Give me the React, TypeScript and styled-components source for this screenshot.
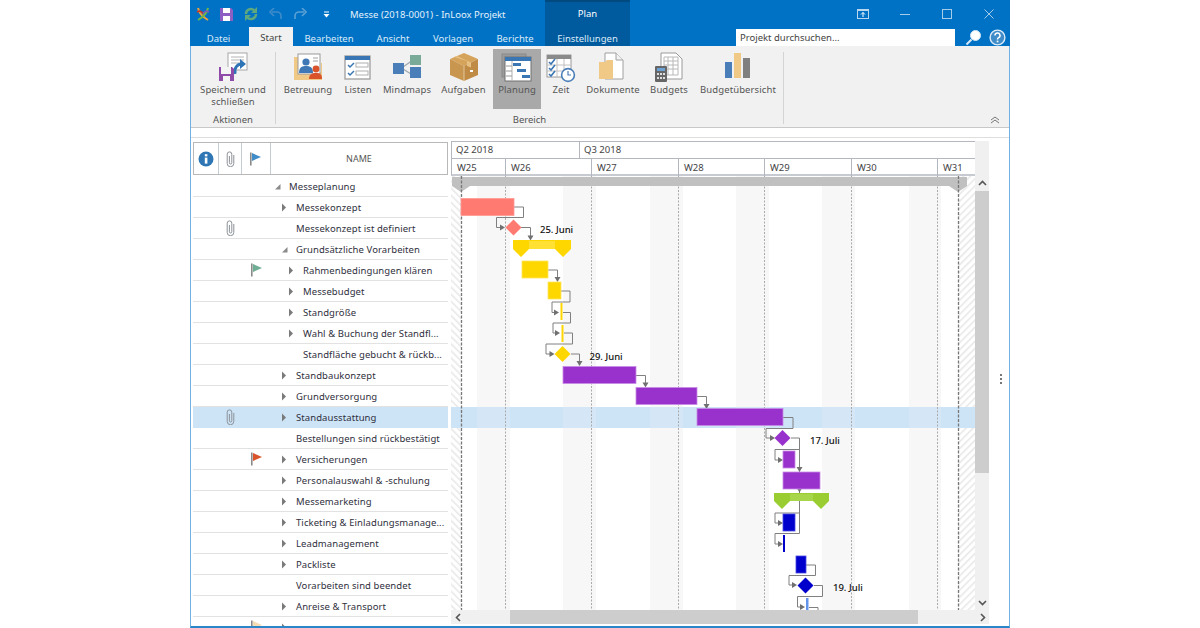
import React from "react";
import styled, { createGlobalStyle } from "styled-components";

const Global = createGlobalStyle`
  html, body { margin: 0; padding: 0; background: #fff; }
  body { font-family: "Noto Sans", "Open Sans", "Liberation Sans", sans-serif; }
  * { box-sizing: border-box; }
`;

const Win = styled.div`
  width: 820px; height: 628px; margin: 0 auto; display: flex; flex-direction: column; overflow: hidden;
  background: #fff; font-size: 9.5px; color: #333;
`;
const TitleBar = styled.div`
  height: 28px; background: #0072c6; display: flex; align-items: stretch; color: #fff;
`;
const Qat = styled.div`
  width: 160px; display: flex; align-items: center; padding-left: 5px;
`;
const QatSlot = styled.div<{ $w: number }>`
  width: ${p => p.$w}px; height: 18px; display: flex; align-items: center; justify-content: center;
`;
const Title = styled.div`
  width: 195px; display: flex; align-items: center; font-size: 9.5px; color: #e6f1fa;
`;
const PlanLabel = styled.div`
  width: 85px; background: #005a9e; border-top: 2px solid #004a80; text-align: center; padding-top: 5px; font-size: 9.5px;
`;
const WinButtons = styled.div`
  flex: 1; display: flex; justify-content: flex-end;
`;
const WinButton = styled.div`
  width: 42px; display: flex; align-items: center; justify-content: center;
`;
const TabBar = styled.div`
  height: 18px; background: #0072c6; display: flex; align-items: stretch;
`;
const Tab = styled.div<{ $w: number; $active?: boolean; $ctx?: boolean }>`
  width: ${p => p.$w}px; text-align: center; font-size: 9.5px; line-height: 21px;
  color: ${p => (p.$active ? "#444" : "#dcebf7")};
  background: ${p => (p.$active ? "#f1f1f1" : p.$ctx ? "#005a9e" : "transparent")};
  margin-left: ${p => (p.$active ? 2 : 0)}px;
`;
const ActiveTabCap = styled(Tab)`
  margin-top: -1px; line-height: 22px; height: 19px;
`;
const SearchBox = styled.div`
  width: 219px; margin-left: 106px; margin-top: 1px; background: #fff; color: #444; font-size: 9.5px; line-height: 17px; padding-left: 4px;
`;
const TabIcon = styled.div`
  flex: 1; display: flex; align-items: center; gap: 7px; padding-left: 10px;
`;
const Main = styled.div`
  flex: 1; min-height: 0; display: flex; flex-direction: column;
  border-left: 1px solid #6fb1e3; border-right: 1px solid #6fb1e3; border-bottom: 2px solid #2a86c8;
`;
const Ribbon = styled.div`
  height: 82px; background: #f1f1f1; border-bottom: 1px solid #c8c8c8; display: flex; padding-top: 3px;
`;
const RibbonGroup = styled.div<{ $w: number }>`
  width: ${p => p.$w}px; height: 72px; border-right: 1px solid #d4d4d4; display: flex; flex-direction: column; margin-top: 3px; position: relative;
`;
const RibbonButtons = styled.div<{ $pad: number }>`
  display: flex; height: 60px; padding-left: ${p => p.$pad}px; margin-top: -3px;
`;
const RibbonButton = styled.div<{ $w: number; $on?: boolean }>`
  width: ${p => p.$w}px; height: 60px; padding-top: 3px; display: flex; flex-direction: column; align-items: center;
  background: ${p => (p.$on ? "#a9a9a9" : "transparent")}; color: #555; font-size: 9.5px; line-height: 12px; text-align: center; letter-spacing: .1px;
`;
const RibbonIcon = styled.svg`
  width: 32px; height: 31px; flex: none; margin-bottom: 1px;
`;
const GroupLabel = styled.div`
  text-align: center; font-size: 9.5px; line-height: 12px; color: #555; margin-top: 5px;
`;
const RibbonRest = styled.div`
  flex: 1; display: flex; align-items: flex-end; justify-content: flex-end; padding: 0 9px 3px 0;
`;
const Gap = styled.div`
  height: 10px; flex: none; border-bottom: 1px solid #dedede;
`;
const Content = styled.div`
  flex: 1; min-height: 0; display: flex; overflow: hidden;
`;
const TablePane = styled.div`
  width: 255px; margin: 4px 0 0 2px; flex: none;
`;
const THead = styled.div`
  height: 33px; margin-bottom: 1px; border: 1px solid #b8b8b8; display: grid; grid-template-columns: 25px 23px 29px 1fr; background: #fff;
`;
const THeadCell = styled.div<{ $last?: boolean }>`
  display: flex; align-items: center; justify-content: center; position: relative;
  border-right: ${p => (p.$last ? "none" : "1px solid #c4ccd4")}; color: #555; font-size: 9px;
`;
const Row = styled.div<{ $sel?: boolean }>`
  height: 21px; display: grid; grid-template-columns: 26px 23px 29px 177px;
  border-bottom: 1px solid ${p => (p.$sel ? "#cde4f7" : "#e2e2e2")};
  background: ${p => (p.$sel ? "#cde4f7" : "#fff")};
`;
const IconCell = styled.div`
  display: flex; align-items: center; justify-content: center;
`;
const NameCell = styled.div<{ $level: number }>`
  display: flex; align-items: center; min-width: 0; padding-left: ${p => 3 + 7 * p.$level}px;
  color: #2f2f3d; font-size: 9.5px; letter-spacing: .08px;
`;
const Toggle = styled.div`
  width: 15px; flex: none; display: flex; align-items: center;
`;
const Name = styled.span`
  white-space: nowrap;
`;
const GanttPane = styled.div`
  width: 538px; margin: 3px 0 0 3px; flex: none; display: grid; grid-template-columns: 524px 14px; grid-template-rows: 35px 434px 14px;
`;
const GHead = styled.div`
  display: flex; flex-direction: column; border: 1px solid #b4b6c0; border-bottom: 2px solid #c8cad2; border-right: none;
`;
const GHeadRow = styled.div<{ $b?: boolean }>`
  display: flex; flex: 1; ${p => (p.$b ? "border-bottom: 1px solid #b4b6c0;" : "")}
`;
const GHeadCell = styled.div<{ $w: number; $last?: boolean; $low?: boolean }>`
  width: ${p => p.$w}px; padding-left: ${p => (p.$low ? 5 : 4)}px; color: #444; font-size: 9.5px; line-height: ${p => (p.$low ? 18 : 16)}px;
  ${p => (p.$last ? "flex: 1;" : "border-right: 1px solid #b4b6c0;")}
`;
const HeadCorner = styled.div`
  background: #f0f0f0;
`;
const Chart = styled.svg`
  display: block; width: 524px; height: 434px;
`;
const VScroll = styled.div`
  background: #f0f0f0; display: flex; flex-direction: column; align-items: stretch;
`;
const ScrollBtn = styled.div<{ $h: number }>`
  height: ${p => p.$h}px; flex: none; display: flex; align-items: center; justify-content: center;
`;
const VThumb = styled.div`
  height: 282px; background: #cdcdcd; flex: none;
`;
const Fill = styled.div`
  flex: 1;
`;
const HScroll = styled.div`
  grid-column: 1 / 3; background: #f0f0f0; display: flex; align-items: stretch;
`;
const HThumb = styled.div`
  width: 408px; background: #cdcdcd; margin-left: 45px;
`;
const ScrollEnd = styled.div<{ $w: number }>`
  width: ${p => p.$w}px; flex: none; display: flex; align-items: center; justify-content: center;
`;
const Splitter = styled.div`
  flex: 1; display: flex; flex-direction: column; align-items: center; justify-content: center; gap: 2px; padding: 0 0 6px 4px;
`;
const Dot = styled.div`
  width: 2px; height: 2px; background: #777;
`;
const ChartLabel = styled.text`
  font-family: "Noto Sans", "Open Sans", sans-serif; font-size: 9.5px; font-weight: 500; fill: #111;
`;

const Chev = ({ d }: { d: string }) => (
  <svg width="9" height="9" viewBox="0 0 9 9"><path d={d} fill="none" stroke="#555" strokeWidth="1.6" /></svg>
);

const Clip = () => (
  <svg width="9" height="16" viewBox="0 0 9 16">
    <path d="M7.8 4v8.4a3.3 3.3 0 0 1-6.6 0V3.2a2.3 2.3 0 0 1 4.6 0v8.6a1.2 1.2 0 0 1-2.4 0V5" fill="none" stroke="#8c9298" strokeWidth="1" />
  </svg>
);
const Flag = ({ c }: { c: string }) => (
  <svg width="12" height="14" viewBox="0 0 12 14">
    <rect x="0" y="0.5" width="1.6" height="13" fill="#8a8a8a" /><path d="M2 1l9 4-9 4z" fill={c} />
  </svg>
);
const Closed = () => <svg width="6" height="9" viewBox="0 0 6 9"><path d="M1 .5l4 4-4 4z" fill="#7a7a7a" /></svg>;
const Open = () => <svg width="7" height="7" viewBox="0 0 7 7"><path d="M6.5 1v5.5H1z" fill="#8a8a8a" /></svg>;

const SaveIcon = () => (
  <RibbonIcon viewBox="0 0 32 31">
    <rect x="11" y="1" width="19" height="17" fill="#fff" stroke="#a8a8a8" />
    <path d="M14 5h13M14 8h13M14 11h9" stroke="#b4b4b4" />
    <path d="M18 22c-1-6 2-10 7-10" fill="none" stroke="#2f75b5" strokeWidth="3" /><path d="M23 7l6 5-6 5z" fill="#2f75b5" />
    <path d="M2 15h13l2 2v12H2z" fill="#8e4ba8" /><rect x="4" y="15" width="10" height="7" fill="#f4f4f4" /><rect x="6" y="24" width="7" height="5" fill="#f4f4f4" />
  </RibbonIcon>
);
const CareIcon = () => (
  <RibbonIcon viewBox="0 0 32 31">
    <path d="M2 5h4v22h24V11h-1V27H2z" fill="#f0c987" /><rect x="2" y="20" width="28" height="8" fill="#f0c987" />
    <rect x="6" y="2" width="22" height="20" fill="#fff" stroke="#9a9a9a" />
    <circle cx="14" cy="10" r="3.6" fill="#3f78b4" /><path d="M7 21c0-6 3-7 7-7s7 1 7 7z" fill="#3f78b4" />
    <path d="M21 6h5M21 9h5" stroke="#a0a0a0" />
    <circle cx="24" cy="17" r="3.4" fill="#d9542b" /><path d="M17 27c0-5 3-6 7-6s6 1 6 6z" fill="#d9542b" />
  </RibbonIcon>
);
const ListIcon = () => (
  <RibbonIcon viewBox="0 0 32 31">
    <rect x="3" y="4" width="25" height="23" fill="#fff" stroke="#a4a4a4" strokeWidth="1.4" />
    <rect x="3" y="4" width="25" height="4" fill="#3a76b3" />
    <rect x="14" y="11" width="12" height="4" fill="#fff" stroke="#b0b0b0" /><rect x="14" y="19" width="12" height="4" fill="#fff" stroke="#b0b0b0" />
    <path d="M6 13l2 2 4-4M6 21l2 2 4-4" fill="none" stroke="#3a76b3" strokeWidth="1.5" />
  </RibbonIcon>
);
const MindIcon = () => (
  <RibbonIcon viewBox="0 0 32 31">
    <path d="M12 15L22 8M12 17l8 5" stroke="#9aa7b0" strokeWidth="1.2" />
    <rect x="2" y="11" width="11" height="11" fill="#4a7eb8" /><rect x="19" y="3" width="11" height="10" fill="#7aab98" /><rect x="19" y="15" width="11" height="11" fill="#4a7eb8" />
  </RibbonIcon>
);
const BoxIcon = () => (
  <RibbonIcon viewBox="0 0 32 31">
    <path d="M16 1l14 6-14 7L2 7z" fill="#d6a35a" /><path d="M2 7l14 7v15L2 23z" fill="#c8964f" /><path d="M30 7l-14 7v15l14-6z" fill="#c08c45" />
    <path d="M9 4l14 6.5v5l-4-1.5V9L6 5z" fill="#e6bf82" /><rect x="22" y="18" width="3" height="2" fill="#fff" />
    <path d="M16 14v15" stroke="#f1dfc0" strokeWidth=".7" />
  </RibbonIcon>
);
const PlanIcon = () => (
  <RibbonIcon viewBox="0 0 32 31">
    <rect x="1" y="2" width="24" height="23" fill="#9a9a9a" stroke="#8a8a8a" />
    <rect x="4" y="5" width="26" height="24" fill="#fff" stroke="#707070" />
    <rect x="4" y="5" width="26" height="4" fill="#3a76b3" /><path d="M11 9v20" stroke="#b0b0b0" /><path d="M5 14h6M5 19h6M5 24h6" stroke="#9a9a9a" />
    <rect x="12" y="11" width="8" height="3" fill="#3a76b3" /><rect x="16" y="17" width="9" height="3" fill="#3a76b3" /><rect x="21" y="23" width="8" height="3" fill="#3a76b3" />
  </RibbonIcon>
);
const TimeIcon = () => (
  <RibbonIcon viewBox="0 0 32 31">
    <rect x="2" y="3" width="24" height="22" fill="#fff" stroke="#9a9a9a" /><rect x="2" y="3" width="24" height="4" fill="#8a8a8a" />
    <path d="M12 7v18M19 7v18M2 13h24M2 19h24" stroke="#c0c0c0" />
    <path d="M4 10l2 2 4-5M4 16l2 2 4-5M4 22l2 2 4-5" fill="none" stroke="#3a76b3" strokeWidth="1.6" />
    <circle cx="23" cy="23" r="6.4" fill="#fff" stroke="#4a7eb8" strokeWidth="1.6" /><path d="M23 19v4h3" fill="none" stroke="#4a7eb8" strokeWidth="1.2" />
  </RibbonIcon>
);
const DocIcon = () => (
  <RibbonIcon viewBox="0 0 32 31">
    <path d="M8 1h11l7 7v19H8z" fill="#fff" stroke="#a0a0a0" /><path d="M19 1v7h7" fill="#f2f2f2" stroke="#a0a0a0" />
    <path d="M2 10h6l2 -2h6v19H2z" fill="#f0c987" />
  </RibbonIcon>
);
const BudgetIcon = () => (
  <RibbonIcon viewBox="0 0 32 31">
    <path d="M8 1h15l6 6v20H8z" fill="#fff" stroke="#9a9a9a" />
    <path d="M11 5h14v18H11zM11 9h14M11 13h14M11 17h14M15 5v18M20 5v18" fill="none" stroke="#b8b8b8" />
    <rect x="2" y="14" width="12" height="16" fill="#666" rx="1" /><rect x="4" y="16" width="8" height="3" fill="#6ea2d4" />
    <path d="M4 21h2v2H4zM7 21h2v2H7zM10 21h2v2h-2zM4 25h2v2H4zM7 25h2v2H7zM10 25h2v2h-2z" fill="#ddd" />
  </RibbonIcon>
);
const BarsIcon = () => (
  <RibbonIcon viewBox="0 0 32 31">
    <rect x="3" y="10" width="7" height="16" fill="#4a7eb8" /><rect x="12" y="1" width="7" height="25" fill="#f0c987" /><rect x="21" y="6" width="7" height="20" fill="#808080" />
  </RibbonIcon>
);

type RowData = { name: string; level: number; kind?: "open" | "closed" | "none"; clip?: boolean; flag?: string; sel?: boolean };
const rows: RowData[] = [
  { name: "Messeplanung", level: 0, kind: "open" },
  { name: "Messekonzept", level: 1, kind: "closed" },
  { name: "Messekonzept ist definiert", level: 1, clip: true },
  { name: "Grundsätzliche Vorarbeiten", level: 1, kind: "open" },
  { name: "Rahmenbedingungen klären", level: 2, kind: "closed", flag: "#6fae94" },
  { name: "Messebudget", level: 2, kind: "closed" },
  { name: "Standgröße", level: 2, kind: "closed" },
  { name: "Wahl & Buchung der Standfl...", level: 2, kind: "closed" },
  { name: "Standfläche gebucht & rückb...", level: 2 },
  { name: "Standbaukonzept", level: 1, kind: "closed" },
  { name: "Grundversorgung", level: 1, kind: "closed" },
  { name: "Standausstattung", level: 1, kind: "closed", clip: true, sel: true },
  { name: "Bestellungen sind rückbestätigt", level: 1 },
  { name: "Versicherungen", level: 1, kind: "closed", flag: "#d9542b" },
  { name: "Personalauswahl & -schulung", level: 1, kind: "closed" },
  { name: "Messemarketing", level: 1, kind: "closed" },
  { name: "Ticketing & Einladungsmanage...", level: 1, kind: "closed" },
  { name: "Leadmanagement", level: 1, kind: "closed" },
  { name: "Packliste", level: 1, kind: "closed" },
  { name: "Vorarbeiten sind beendet", level: 1 },
  { name: "Anreise & Transport", level: 1, kind: "closed" },
  { name: "", level: 1, kind: "closed", flag: "#f4dcb4" },
];

const weeks: [string, number][] = [["W25", 54], ["W26", 86], ["W27", 87], ["W28", 86], ["W29", 87], ["W30", 86]];
const weekLines = [505.5, 591.5, 678.5, 764.5, 851.5, 937.5];
const weekends: [number, number][] = [[477, 510], [563, 596], [650, 683], [736, 769], [822, 855], [909, 941]];

type Bar = [number, number, number, number, string, string];
const bars: Bar[] = [
  [461, 198.5, 53, 17, "#ff7b72", "#ff9a92"],
  [522, 261, 26, 17, "#ffd700", "#ffe45c"],
  [548, 282, 13, 17, "#ffd700", "#ffe45c"],
  [560.5, 303, 2, 17, "#ffd700", "#ffd700"],
  [561.5, 325, 2, 17, "#ffd700", "#ffd700"],
  [563, 366.5, 73, 17, "#9932cc", "#c78be6"],
  [636, 387.5, 61, 17, "#9932cc", "#c78be6"],
  [697, 408.5, 86, 17, "#9932cc", "#c78be6"],
  [783, 451, 12, 17, "#9932cc", "#c78be6"],
  [783, 472, 37, 17, "#9932cc", "#c78be6"],
  [783, 514, 12, 17, "#0000cd", "#4a4ae0"],
  [783, 535, 2, 17, "#0000cd", "#0000cd"],
  [796, 556, 10, 17, "#0000cd", "#4a4ae0"],
  [806, 598, 2.5, 17, "#6495ed", "#6495ed"],
];
const diamonds: [number, number, string][] = [
  [513.5, 227.5, "#ff7b72"], [562.5, 354, "#ffd700"], [782.5, 438, "#9932cc"], [805.5, 585.5, "#0000cd"],
];
const links: string[] = [
  "M514 207H523.5V217.5H496.5V227.5H503",
  "M521 227.5H530.5V238",
  "M548 270H557.5V280",
  "M561 291H570V302H552V312.5H557",
  "M563 312.5H570.5V323H553V333H558",
  "M564 333H572.5V344H546V354H552",
  "M571 354H579.5V364",
  "M636 375.5H645.5V385",
  "M697 396.5H706.5V406.5",
  "M783 417.5H793V428.5H766V438H773",
  "M791 438H799.5V533.5H775V544H781",
  "M799.5 449.5H775V460H781",
  "M799.5 513H775V523H781",
  "M806 565H815.5V575.5H789V585H795",
  "M814 585.5H822.5V596.5H797.5V607H803",
  "M809 607.5H818V615",
];
const arrows: [number, number, "r" | "d"][] = [
  [505, 227.5, "r"], [530.5, 240.5, "d"], [557.5, 282, "d"], [559, 312.5, "r"], [560, 333, "r"], [554.5, 354, "r"], [579.5, 366, "d"],
  [645.5, 387.5, "d"], [706.5, 409, "d"], [775, 438, "r"], [783, 460, "r"], [799.5, 472, "d"], [799.5, 492.5, "d"], [783, 523, "r"],
  [783, 544, "r"], [797, 585, "r"], [805, 607, "r"],
];

const Gantt = () => (
  <Chart viewBox="451 176 524 434">
    <defs>
      <pattern id="hatchL" width="5" height="5" patternUnits="userSpaceOnUse" patternTransform="rotate(-45)">
        <rect width="5" height="5" fill="#fff" /><rect width="1.6" height="5" fill="#e8e8e8" />
      </pattern>
      <pattern id="hatchR" width="5" height="5" patternUnits="userSpaceOnUse" patternTransform="rotate(45)">
        <rect width="5" height="5" fill="#fff" /><rect width="1.6" height="5" fill="#e8e8e8" />
      </pattern>
    </defs>
    <rect x="451" y="176" width="524" height="434" fill="#fff" />
    {weekends.map(([a, b]) => <rect key={a} x={a} y="176" width={b - a} height="434" fill="#f7f7f7" />)}
    <rect x="451" y="176" width="10" height="434" fill="url(#hatchL)" />
    <rect x="958" y="176" width="17" height="434" fill="url(#hatchR)" />
    <rect x="451" y="407" width="524" height="21" fill="#cde4f7" />
    {weekends.map(([a, b]) => <rect key={a} x={a} y="407" width={b - a} height="21" fill="#f5f5f5" opacity=".2" />)}
    {weekLines.map(x => <path key={x} d={`M${x} 176V610`} stroke="#aaa" strokeWidth="1" strokeDasharray="2 1.5" />)}
    <path d="M452 177H967V186H967L958 192L949 186H470L461 192L452 186Z" fill="#c0c0c0" />
    <path d="M461.5 176V610M958.5 176V610" stroke="#777" strokeWidth="1.3" strokeDasharray="3 1.5" />
    {links.map(d => <path key={d} d={d} fill="none" stroke="#808080" strokeWidth="1" />)}
    {arrows.map(([x, y, t], i) =>
      <path key={i} d={t === "r" ? `M${x} ${y}l-5-3v6z` : `M${x} ${y}l-3-5h6z`} fill="#707070" />)}
    {bars.map(([x, y, w, h, f, s], i) => (
      <rect key={i} x={x} y={y} width={w} height={h} fill={f} stroke={w > 3 ? s : "none"} strokeWidth=".8" />
    ))}
    <path d="M513 240H571V249H571V249L563 257L555 249H529L521 257L513 249Z" fill="#ffd700" />
    <path d="M529 241H555V249H529Z" fill="#ffe033" />
    <path d="M774 493H829V501L821 509L813 501H790L782 509L774 501Z" fill="#9acd32" />
    <path d="M790 494H813V501H790Z" fill="#a8d64a" />
    {diamonds.map(([x, y, c]) => <path key={x} d={`M${x - 8} ${y}L${x} ${y - 8}L${x + 8} ${y}L${x} ${y + 8}Z`} fill={c} />)}
    <ChartLabel x="540" y="233">25. Juni</ChartLabel>
    <ChartLabel x="589.5" y="359.5">29. Juni</ChartLabel>
    <ChartLabel x="810" y="443.5">17. Juli</ChartLabel>
    <ChartLabel x="833" y="591">19. Juli</ChartLabel>
  </Chart>
);

export default function App() {
  return (
    <>
      <Global />
      <Win>
        <TitleBar>
          <Qat>
            <QatSlot $w={16}>
              <svg width="14" height="16" viewBox="0 0 14 16">
                <path d="M2 2c1 5 5 9 10 12" fill="none" stroke="#e8a33d" strokeWidth="2" /><path d="M12 2C11 7 7 11 2 14" fill="none" stroke="#6fb54a" strokeWidth="2" />
                <path d="M1 6c3-2 5 0 6 2" fill="none" stroke="#c0392b" strokeWidth="1.6" /><path d="M13 6c-3-2-5 0-6 2" fill="none" stroke="#7b5bb5" strokeWidth="1.6" />
              </svg>
            </QatSlot>
            <QatSlot $w={30}>
              <svg width="13" height="13" viewBox="0 0 13 13"><path d="M0 0h11l2 2v11H0z" fill="#8e5fc2" /><rect x="3" y="0" width="7" height="5" fill="#fff" /><rect x="3" y="8" width="7" height="5" fill="#fff" /></svg>
            </QatSlot>
            <QatSlot $w={20}>
              <svg width="14" height="14" viewBox="0 0 14 14"><path d="M2 7a5 5 0 0 1 9-3" fill="none" stroke="#5fa77c" strokeWidth="2.4" /><path d="M12 7a5 5 0 0 1-9 3" fill="none" stroke="#5fa77c" strokeWidth="2.4" /><path d="M13 0v6H7zM1 14V8h6z" fill="#5fa77c" /></svg>
            </QatSlot>
            <QatSlot $w={28}>
              <svg width="13" height="12" viewBox="0 0 13 12"><path d="M3 4h5a4 4 0 0 1 4 4v3" fill="none" stroke="#3f8cc8" strokeWidth="1.6" /><path d="M5 0L1 4l4 4" fill="none" stroke="#3f8cc8" strokeWidth="1.6" /></svg>
            </QatSlot>
            <QatSlot $w={22}>
              <svg width="13" height="12" viewBox="0 0 13 12"><path d="M10 4H5a4 4 0 0 0-4 4v3" fill="none" stroke="#5aa0d4" strokeWidth="1.6" /><path d="M8 0l4 4-4 4" fill="none" stroke="#5aa0d4" strokeWidth="1.6" /></svg>
            </QatSlot>
            <QatSlot $w={30}>
              <svg width="7" height="7" viewBox="0 0 7 7"><path d="M1 1h5" stroke="#fff" /><path d="M.5 3h6L3.5 6.5z" fill="#fff" /></svg>
            </QatSlot>
          </Qat>
          <Title>Messe (2018-0001) - InLoox Projekt</Title>
          <PlanLabel>Plan</PlanLabel>
          <WinButtons>
            <WinButton>
              <svg width="12" height="10" viewBox="0 0 12 10"><rect x=".5" y=".5" width="11" height="9" fill="none" stroke="#b8d6ee" /><path d="M.5 1.5h11" stroke="#b8d6ee" /><path d="M6 8V3.5M4 5.5l2-2 2 2" fill="none" stroke="#fff" /></svg>
            </WinButton>
            <WinButton><svg width="10" height="10" viewBox="0 0 10 10"><path d="M0 5.5h10" stroke="#a5cdea" /></svg></WinButton>
            <WinButton><svg width="10" height="10" viewBox="0 0 10 10"><rect x=".5" y=".5" width="9" height="9" fill="none" stroke="#a5cdea" /></svg></WinButton>
            <WinButton><svg width="10" height="10" viewBox="0 0 10 10"><path d="M.5.5l9 9M9.5.5l-9 9" stroke="#a5cdea" /></svg></WinButton>
          </WinButtons>
        </TitleBar>
        <TabBar>
          <Tab $w={57}>Datei</Tab>
          <ActiveTabCap $w={44} $active>Start</ActiveTabCap>
          <Tab $w={72}>Bearbeiten</Tab>
          <Tab $w={56}>Ansicht</Tab>
          <Tab $w={64}>Vorlagen</Tab>
          <Tab $w={60}>Berichte</Tab>
          <Tab $w={85} $ctx>Einstellungen</Tab>
          <SearchBox>Projekt durchsuchen...</SearchBox>
          <TabIcon>
            <svg width="17" height="17" viewBox="0 0 17 17"><circle cx="10.5" cy="6.5" r="5" fill="#fff" stroke="#cfe4f4" /><path d="M6.5 10.5L1.5 15.5" stroke="#d8e9f6" strokeWidth="2" /></svg>
            <svg width="17" height="17" viewBox="0 0 17 17"><circle cx="8.5" cy="8.5" r="7.4" fill="#3f8cc8" stroke="#dcebf7" strokeWidth="1.4" /><path d="M6 6.5a2.5 2.5 0 1 1 3.6 2.2c-.8.4-1.1.9-1.1 1.8" fill="none" stroke="#fff" strokeWidth="1.5" /><rect x="7.7" y="11.6" width="1.7" height="1.7" fill="#fff" /></svg>
          </TabIcon>
        </TabBar>
        <Main>
          <Ribbon>
            <RibbonGroup $w={85}>
              <RibbonButtons $pad={0}>
                <RibbonButton $w={84}><SaveIcon />Speichern und<br />schließen</RibbonButton>
              </RibbonButtons>
              <GroupLabel>Aktionen</GroupLabel>
            </RibbonGroup>
            <RibbonGroup $w={508}>
              <RibbonButtons $pad={4}>
                <RibbonButton $w={56}><CareIcon />Betreuung</RibbonButton>
                <RibbonButton $w={44}><ListIcon />Listen</RibbonButton>
                <RibbonButton $w={54}><MindIcon />Mindmaps</RibbonButton>
                <RibbonButton $w={59}><BoxIcon />Aufgaben</RibbonButton>
                <RibbonButton $w={48} $on><PlanIcon />Planung</RibbonButton>
                <RibbonButton $w={40}><TimeIcon />Zeit</RibbonButton>
                <RibbonButton $w={64}><DocIcon />Dokumente</RibbonButton>
                <RibbonButton $w={48}><BudgetIcon />Budgets</RibbonButton>
                <RibbonButton $w={90}><BarsIcon />Budgetübersicht</RibbonButton>
              </RibbonButtons>
              <GroupLabel>Bereich</GroupLabel>
            </RibbonGroup>
            <RibbonRest>
              <svg width="10" height="8" viewBox="0 0 10 8"><path d="M1 4l4-3 4 3M1 7l4-3 4 3" fill="none" stroke="#777" /></svg>
            </RibbonRest>
          </Ribbon>
          <Gap />
          <Content>
            <TablePane>
              <THead>
                <THeadCell>
                  <svg width="16" height="16" viewBox="0 0 16 16"><circle cx="8" cy="8" r="7.5" fill="#2f76b5" /><rect x="6.8" y="6.6" width="2.6" height="6" fill="#fff" /><rect x="6.8" y="3.2" width="2.6" height="2.2" fill="#fff" /></svg>
                </THeadCell>
                <THeadCell><Clip /></THeadCell>
                <THeadCell><Flag c="#3f8cc8" /></THeadCell>
                <THeadCell $last>NAME</THeadCell>
              </THead>
              {rows.map((r, i) => (
                <Row key={i} $sel={r.sel}>
                  <IconCell />
                  <IconCell>{r.clip && <Clip />}</IconCell>
                  <IconCell>{r.flag && <Flag c={r.flag} />}</IconCell>
                  <NameCell $level={r.level}>
                    <Toggle>{r.kind === "open" ? <Open /> : r.kind === "closed" ? <Closed /> : null}</Toggle>
                    <Name>{r.name}</Name>
                  </NameCell>
                </Row>
              ))}
            </TablePane>
            <GanttPane>
              <GHead>
                <GHeadRow $b>
                  <GHeadCell $w={128}>Q2 2018</GHeadCell>
                  <GHeadCell $w={394} $last>Q3 2018</GHeadCell>
                </GHeadRow>
                <GHeadRow>
                  {weeks.map(([w, x]) => <GHeadCell key={w} $w={x} $low>{w}</GHeadCell>)}
                  <GHeadCell $w={36} $last $low>W31</GHeadCell>
                </GHeadRow>
              </GHead>
              <HeadCorner />
              <Gantt />
              <VScroll>
                <ScrollBtn $h={15}><Chev d="M1 6l3.5-3.5L8 6" /></ScrollBtn>
                <VThumb />
                <Fill />
                <ScrollBtn $h={15}><Chev d="M1 3l3.5 3.5L8 3" /></ScrollBtn>
              </VScroll>
              <HScroll>
                <ScrollEnd $w={14}><Chev d="M6 1L2.5 4.5 6 8" /></ScrollEnd>
                <HThumb />
                <Fill />
                <ScrollEnd $w={14}><Chev d="M3 1l3.5 3.5L3 8" /></ScrollEnd>
              </HScroll>
            </GanttPane>
            <Splitter><Dot /><Dot /><Dot /></Splitter>
          </Content>
        </Main>
      </Win>
    </>
  );
}
